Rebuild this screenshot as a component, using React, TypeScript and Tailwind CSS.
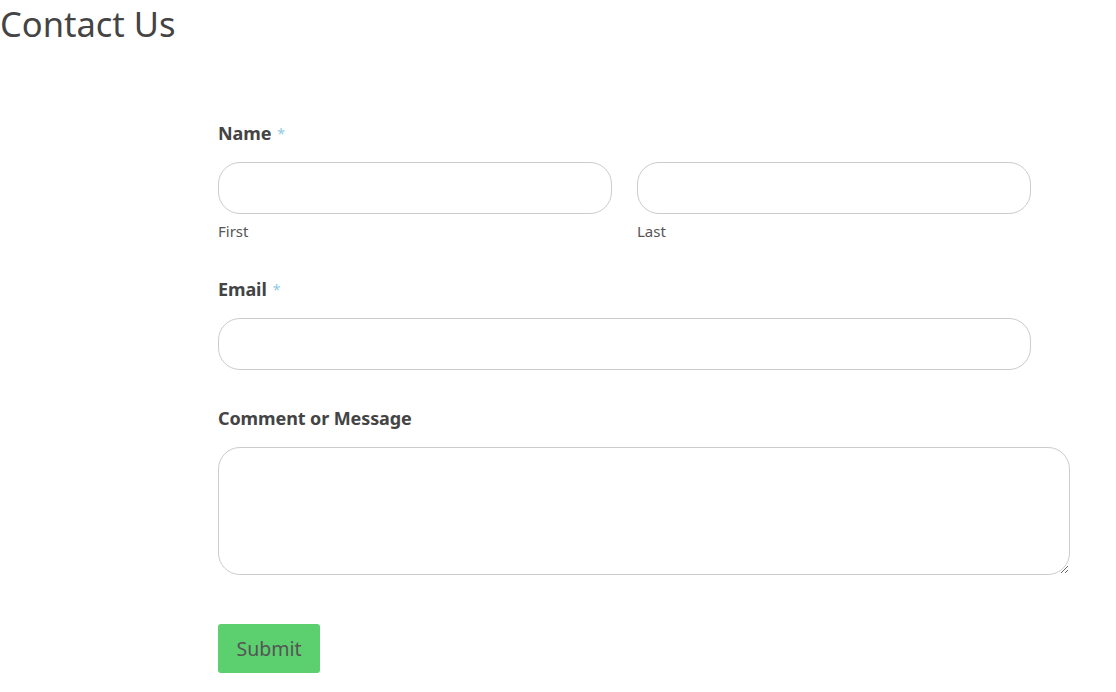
const FONT = "font-['Segoe_UI','Noto_Sans',sans-serif]";

const Label = ({ text, required }: { text: string; required?: boolean }) => (
  <div className="flex h-[24px] items-center text-[18px] font-bold tracking-[-0.1px] text-[#444]">
    {text}
    {required && <span className="ml-[6px] text-[14px] font-normal text-[#8ecbe0]">*</span>}
  </div>
);

export default function App() {
  return (
    <div className={`${FONT} min-h-[692px] w-[1116px] bg-white text-[#444]`}>
      <h1 className="m-0 pt-[1px] text-[34.5px] leading-[46px] font-normal text-[#444]">Contact Us</h1>

      <form className="ml-[218px] flex w-[852px] flex-col pt-[74px]" onSubmit={(e) => e.preventDefault()}>
        <Label text="Name" required />
        <div className="mt-[17px] flex w-[813px] gap-[25px]">
          <div className="flex flex-1 flex-col">
            <input className="h-[52px] rounded-[22px] border border-[#ccc] px-4 outline-none" />
            <span className="mt-[6px] text-[15px] leading-[22px] text-[#555]">First</span>
          </div>
          <div className="flex flex-1 flex-col">
            <input className="h-[52px] rounded-[22px] border border-[#ccc] px-4 outline-none" />
            <span className="mt-[6px] text-[15px] leading-[22px] text-[#555]">Last</span>
          </div>
        </div>

        <div className="mt-[35px]">
          <Label text="Email" required />
        </div>
        <input className="mt-[17px] h-[52px] w-[813px] rounded-[22px] border border-[#ccc] px-4 outline-none" />

        <div className="mt-[36px]">
          <Label text="Comment or Message" />
        </div>
        <textarea className="mt-[17px] h-[128px] w-[852px] rounded-[22px] border border-[#ccc] px-4 py-2 outline-none" />

        <div className="mt-[49px]">
          <button
            type="submit"
            className="h-[49px] w-[102px] rounded-[3px] bg-[#5ccf6e] text-[19.5px] text-[#555]"
          >
            Submit
          </button>
        </div>
      </form>
    </div>
  );
}
